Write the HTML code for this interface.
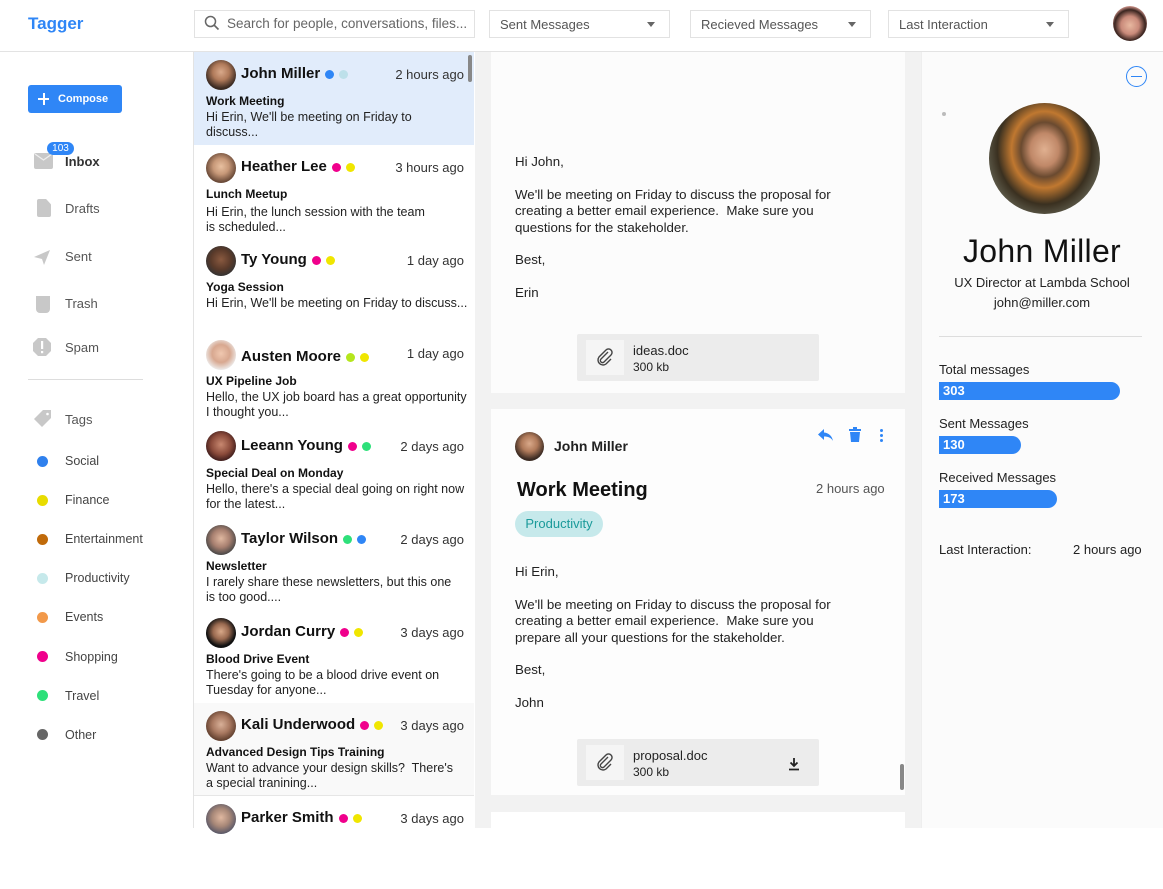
<!DOCTYPE html>
<html><head><meta charset="utf-8"><style>
*{box-sizing:border-box;margin:0;padding:0}
body{width:1163px;height:828px;overflow:hidden;font-family:"Liberation Sans",sans-serif;background:#fff;position:relative;color:#222}
.a{position:absolute;white-space:nowrap}
.hdr{left:0;top:0;width:1163px;height:52px;border-bottom:1px solid #e3e3e3;background:#fff}
.box{border:1px solid #e2e2e2;height:28px;top:10px;font-size:13px;color:#555;padding:6px 10px}
.tri{position:absolute;right:14px;top:11px;width:0;height:0;border-left:4px solid transparent;border-right:4px solid transparent;border-top:5px solid #666}
.nav{left:65px;font-size:13px;color:#555}
.ic{left:34px;width:20px;height:18px;background:#c8c8c8}
.tag{left:37px;width:11px;height:11px;border-radius:50%}
.tl{left:65px;font-size:12.5px;color:#444}
.item{left:194px;width:280px;height:93px}
.av{width:30px;height:30px;border-radius:50%;left:12px;top:8px;background:radial-gradient(circle at 50% 40%,#d9a98a 0,#b07a5a 35%,#3a2a22 70%)}
.nm{left:47px;top:13px;font-size:15px;font-weight:bold;color:#111}
.tm{right:10px;top:15px;font-size:13px;color:#333}
.sb{left:12px;top:42px;font-size:12px;font-weight:bold;color:#111}
.pv{left:12px;top:58px;font-size:12.5px;line-height:15px;color:#222}
.d{display:inline-block;width:9px;height:9px;border-radius:50%;margin-left:5px;vertical-align:-1px}
.card{background:#fff;left:491px;width:414px}
.bt{font-size:13.3px;color:#222;line-height:16.4px}
.att{background:#ececec;border-radius:2px;width:242px;height:47px}
.clip{left:9px;top:6px;width:38px;height:35px;background:#f5f5f5}
.bar{left:939px;height:18px;background:#2f86f6;border-radius:0 9px 9px 0;color:#fff;font-weight:bold;font-size:13px;padding:1px 4px}
.rl{left:939px;font-size:13px;color:#222}
</style></head><body>
<div class="a hdr"></div>
<div class="a" style="left:28px;top:14px;font-size:17px;font-weight:bold;color:#2f86f6">Tagger</div>
<div class="a box" style="left:194px;width:281px;padding-left:32px;font-size:13.5px;color:#666;padding-top:5px;overflow:hidden">Search for people, conversations, files...</div>
<svg class="a" style="left:204px;top:15px" width="16" height="16" viewBox="0 0 16 16"><circle cx="6.5" cy="6.5" r="5" fill="none" stroke="#666" stroke-width="1.5"/><path d="M10 10l4.5 4.5" stroke="#666" stroke-width="1.6"/></svg>
<div class="a box" style="left:489px;width:181px">Sent Messages<span class="tri"></span></div>
<div class="a box" style="left:690px;width:181px">Recieved Messages<span class="tri"></span></div>
<div class="a box" style="left:888px;width:181px">Last Interaction<span class="tri"></span></div>
<div class="a" style="left:1113px;top:6px;width:34px;height:35px;border-radius:50%;background:radial-gradient(circle at 50% 55%,#e8b8a0 0,#c98a7a 35%,#3a2520 60%,#d79a90 75%)"></div>

<!-- sidebar -->
<div class="a" style="left:193px;top:52px;width:1px;height:776px;background:#e3e3e3"></div>
<div class="a" style="left:28px;top:85px;width:94px;height:28px;background:#2f86f6;border-radius:3px;color:#fff;font-size:11px;font-weight:bold;padding:8px 0 0 30px">Compose</div>
<div class="a" style="left:38px;top:98px;width:11px;height:2px;background:#fff"></div>
<div class="a" style="left:42.5px;top:93px;width:2px;height:12px;background:#fff"></div>
<div class="a ic" style="top:153px;width:19px;height:16px;border-radius:2px"></div>
<svg class="a" style="left:34px;top:153px" width="19" height="10"><path d="M1 1l8.5 6 8.5-6" fill="none" stroke="#eee" stroke-width="1.3"/></svg>
<div class="a" style="left:47px;top:142px;width:27px;height:13px;background:#2f86f6;border-radius:7px;color:#fff;font-size:10px;text-align:center;line-height:13px">103</div>
<div class="a nav" style="top:154px;font-weight:bold;color:#333">Inbox</div>
<div class="a ic" style="top:199px;left:37px;width:14px;height:18px;border-radius:2px;clip-path:polygon(0 0,65% 0,100% 30%,100% 100%,0 100%)"></div>
<div class="a nav" style="top:201px">Drafts</div>
<svg class="a" style="left:33px;top:248px" width="18" height="18"><path d="M1 9L17 2 11 17 9 11z" fill="#c8c8c8"/></svg>
<div class="a nav" style="top:249px">Sent</div>
<div class="a ic" style="top:296px;left:36px;width:14px;height:17px;border-radius:0 0 4px 4px"></div>
<div class="a nav" style="top:296px">Trash</div>
<svg class="a" style="left:33px;top:338px" width="18" height="18"><path d="M5 0h8l5 5v8l-5 5H5l-5-5V5z" fill="#c8c8c8"/><rect x="8" y="3" width="2.2" height="8" fill="#fff"/><rect x="8" y="13" width="2.2" height="2.2" fill="#fff"/></svg>
<div class="a nav" style="top:340px">Spam</div>
<div class="a" style="left:28px;top:379px;width:115px;height:1px;background:#ddd"></div>
<svg class="a" style="left:33px;top:409px" width="20" height="20"><path d="M10 1h8v8l-9 9-8-8z" fill="#c8c8c8"/><circle cx="14.5" cy="5" r="1.3" fill="#fff"/></svg>
<div class="a nav" style="top:412px">Tags</div>
<div class="a tag" style="top:456px;background:#2f80ed"></div><div class="a tl" style="top:454px">Social</div>
<div class="a tag" style="top:495px;background:#e8dc00"></div><div class="a tl" style="top:493px">Finance</div>
<div class="a tag" style="top:534px;background:#c06a0a"></div><div class="a tl" style="top:532px">Entertainment</div>
<div class="a tag" style="top:573px;background:#c6e9eb"></div><div class="a tl" style="top:571px">Productivity</div>
<div class="a tag" style="top:612px;background:#f2994a"></div><div class="a tl" style="top:610px">Events</div>
<div class="a tag" style="top:651px;background:#f0008c"></div><div class="a tl" style="top:650px">Shopping</div>
<div class="a tag" style="top:690px;background:#2ee07a"></div><div class="a tl" style="top:689px">Travel</div>
<div class="a tag" style="top:729px;background:#666"></div><div class="a tl" style="top:728px">Other</div>

<!-- list -->
<div class="a item" style="top:52px;background:#e1ecfb">
 <div class="a av"></div><div class="a nm">John Miller<span class="d" style="background:#2f86f6"></span><span class="d" style="background:#bde0ea"></span></div><div class="a tm">2 hours ago</div>
 <div class="a sb">Work Meeting</div><div class="a pv">Hi Erin, We'll be meeting on Friday to<br>discuss...</div></div>
<div class="a item" style="top:145px">
 <div class="a av" style="background:radial-gradient(circle at 50% 45%,#e8c0a0 0,#c79878 35%,#6a4a38 70%)"></div><div class="a nm">Heather Lee<span class="d" style="background:#f0008c"></span><span class="d" style="background:#f0e600"></span></div><div class="a tm">3 hours ago</div>
 <div class="a sb">Lunch Meetup</div><div class="a pv" style="top:60px">Hi Erin, the lunch session with the team<br>is scheduled...</div></div>
<div class="a item" style="top:238px">
 <div class="a av" style="background:radial-gradient(circle at 50% 45%,#8a5a40 0,#5a3a2a 45%,#333 75%)"></div><div class="a nm">Ty Young<span class="d" style="background:#f0008c"></span><span class="d" style="background:#f0e600"></span></div><div class="a tm">1 day ago</div>
 <div class="a sb">Yoga Session</div><div class="a pv">Hi Erin, We'll be meeting on Friday to discuss...</div></div>
<div class="a item" style="top:331px">
 <div class="a av" style="top:9px;background:radial-gradient(circle at 50% 45%,#f0c8b0 0,#d8a890 40%,#eee 75%)"></div><div class="a nm" style="top:17px">Austen Moore<span class="d" style="background:#b5e61d"></span><span class="d" style="background:#f0e600"></span></div><div class="a tm" style="top:15px">1 day ago</div>
 <div class="a sb" style="top:43px">UX Pipeline Job</div><div class="a pv" style="top:59px">Hello, the UX job board has a great opportunity<br>I thought you...</div></div>
<div class="a item" style="top:424px">
 <div class="a av" style="top:7px;background:radial-gradient(circle at 50% 45%,#c88870 0,#8a4a3a 45%,#3a1a1a 75%)"></div><div class="a nm" style="top:13px">Leeann Young<span class="d" style="background:#f0008c"></span><span class="d" style="background:#2ee07a"></span></div><div class="a tm" style="top:15px">2 days ago</div>
 <div class="a sb" style="top:42px">Special Deal on Monday</div><div class="a pv">Hello, there's a special deal going on right now<br>for the latest...</div></div>
<div class="a item" style="top:517px">
 <div class="a av" style="background:radial-gradient(circle at 50% 45%,#e0b8a0 0,#a88070 40%,#444 75%)"></div><div class="a nm">Taylor Wilson<span class="d" style="background:#2ee07a"></span><span class="d" style="background:#2f86f6"></span></div><div class="a tm">2 days ago</div>
 <div class="a sb">Newsletter</div><div class="a pv">I rarely share these newsletters, but this one<br>is too good....</div></div>
<div class="a item" style="top:610px">
 <div class="a av" style="background:radial-gradient(circle at 50% 45%,#d8a888 0,#9a6a50 35%,#111 65%)"></div><div class="a nm">Jordan Curry<span class="d" style="background:#f0008c"></span><span class="d" style="background:#f0e600"></span></div><div class="a tm">3 days ago</div>
 <div class="a sb">Blood Drive Event</div><div class="a pv">There's going to be a blood drive event on<br>Tuesday for anyone...</div></div>
<div class="a item" style="top:703px;background:#f9f9f9;border-bottom:1px solid #e6e6e6">
 <div class="a av" style="background:radial-gradient(circle at 50% 45%,#d8b098 0,#a87860 40%,#5a3a2a 75%)"></div><div class="a nm">Kali Underwood<span class="d" style="background:#f0008c"></span><span class="d" style="background:#f0e600"></span></div><div class="a tm">3 days ago</div>
 <div class="a sb">Advanced Design Tips Training</div><div class="a pv">Want to advance your design skills?&nbsp; There's<br>a special tranining...</div></div>
<div class="a item" style="top:796px">
 <div class="a av" style="background:radial-gradient(circle at 50% 45%,#e0b8a0 0,#a88878 40%,#556 75%)"></div><div class="a nm">Parker Smith<span class="d" style="background:#f0008c"></span><span class="d" style="background:#f0e600"></span></div><div class="a tm">3 days ago</div></div>
<div class="a" style="left:468px;top:55px;width:4px;height:27px;background:#888;border-radius:2px"></div>

<!-- middle -->
<div class="a" style="left:475px;top:52px;width:446px;height:776px;background:#f2f2f2"></div>
<div class="a card" style="top:52px;height:341px;background:#fcfcfc"></div>
<div class="a bt" style="left:515px;top:154px">Hi John,<br><br>We'll be meeting on Friday to discuss the proposal for<br>creating a better email experience.&nbsp; Make sure you<br>questions for the stakeholder.<br><br>Best,<br><br>Erin</div>
<div class="a att" style="left:577px;top:334px"><div class="a clip"></div>
<svg class="a" style="left:19px;top:14px" width="18" height="18" viewBox="0 0 18 18"><path d="M12 4L5 11a2 2 0 003 3l7-7a3.5 3.5 0 00-5-5L3 9a5 5 0 007 7l5-5" fill="none" stroke="#444" stroke-width="1.4"/></svg>
<div class="a" style="left:56px;top:9px;font-size:13px">ideas.doc</div><div class="a" style="left:56px;top:26px;font-size:12px">300 kb</div></div>

<div class="a card" style="top:409px;height:386px;background:#fdfdfd"></div>
<div class="a av" style="left:515px;top:432px;width:29px;height:29px"></div>
<div class="a" style="left:554px;top:438px;font-size:14px;font-weight:bold;color:#222">John Miller</div>
<svg class="a" style="left:817px;top:428px" width="17" height="14" viewBox="0 0 17 14"><path d="M7 1L1 6.5 7 12V8.5c4 0 7 1 9 4.5-1-5-4-8-9-8.5z" fill="#2f86f6"/></svg>
<svg class="a" style="left:849px;top:427px" width="12" height="15" viewBox="0 0 12 15"><rect x="0" y="2" width="12" height="2" fill="#2f86f6"/><rect x="4" y="0" width="4" height="2" fill="#2f86f6"/><path d="M1 5h10l-1 10H2z" fill="#2f86f6"/></svg>
<div class="a" style="left:880px;top:429px;width:3px;height:3px;background:#2f86f6;border-radius:50%;box-shadow:0 5px 0 #2f86f6,0 10px 0 #2f86f6"></div>
<div class="a" style="left:517px;top:479px;font-size:20px;font-weight:bold;color:#111">Work Meeting</div>
<div class="a" style="left:816px;top:481px;font-size:13px;color:#555">2 hours ago</div>
<div class="a" style="left:515px;top:511px;width:88px;height:26px;border-radius:13px;background:#c6e9eb;color:#1a9a9a;font-size:13px;text-align:center;line-height:26px">Productivity</div>
<div class="a bt" style="left:515px;top:564px">Hi Erin,<br><br>We'll be meeting on Friday to discuss the proposal for<br>creating a better email experience.&nbsp; Make sure you<br>prepare all your questions for the stakeholder.<br><br>Best,<br><br>John</div>
<div class="a att" style="left:577px;top:739px"><div class="a clip"></div>
<svg class="a" style="left:19px;top:14px" width="18" height="18" viewBox="0 0 18 18"><path d="M12 4L5 11a2 2 0 003 3l7-7a3.5 3.5 0 00-5-5L3 9a5 5 0 007 7l5-5" fill="none" stroke="#444" stroke-width="1.4"/></svg>
<div class="a" style="left:56px;top:9px;font-size:13px">proposal.doc</div><div class="a" style="left:56px;top:26px;font-size:12px">300 kb</div>
<svg class="a" style="left:210px;top:18px" width="14" height="14"><path d="M7 1v8M3.5 5.5L7 9l3.5-3.5M2 12.5h10" fill="none" stroke="#222" stroke-width="1.8"/></svg></div>
<div class="a" style="left:900px;top:764px;width:4px;height:26px;background:#888;border-radius:2px"></div>
<div class="a card" style="top:812px;height:20px"></div>

<!-- right -->
<div class="a" style="left:921px;top:52px;width:242px;height:776px;background:#fbfbfb;border-left:1px solid #eee"></div>
<div class="a" style="left:1126px;top:66px;width:21px;height:21px;border:1.6px solid #2f86f6;border-radius:50%"></div>
<div class="a" style="left:1131px;top:75.5px;width:11px;height:1.6px;background:#2f86f6"></div>
<div class="a" style="left:942px;top:112px;width:4px;height:4px;border-radius:50%;background:#bbb"></div>
<div class="a" style="left:989px;top:103px;width:111px;height:111px;border-radius:50%;background:radial-gradient(ellipse at 50% 42%,#e0b090 0,#c08868 18%,#6a4a30 30%,#c07830 42%,#3a3020 60%,#6a6a5a 80%,#2a2a20 100%)"></div>
<div class="a" style="left:921px;top:233px;width:242px;text-align:center;font-size:32px;color:#111;letter-spacing:0.3px">John Miller</div>
<div class="a" style="left:921px;top:273px;width:242px;text-align:center;font-size:13px;color:#222;line-height:20px">UX Director at Lambda School<br>john@miller.com</div>
<div class="a" style="left:939px;top:336px;width:203px;height:1px;background:#ddd"></div>
<div class="a rl" style="top:362px">Total messages</div>
<div class="a bar" style="top:382px;width:181px">303</div>
<div class="a rl" style="top:416px">Sent Messages</div>
<div class="a bar" style="top:436px;width:82px">130</div>
<div class="a rl" style="top:470px">Received Messages</div>
<div class="a bar" style="top:490px;width:118px">173</div>
<div class="a rl" style="top:542px">Last Interaction:</div>
<div class="a rl" style="left:1073px;top:542px">2 hours ago</div>
</body></html>
